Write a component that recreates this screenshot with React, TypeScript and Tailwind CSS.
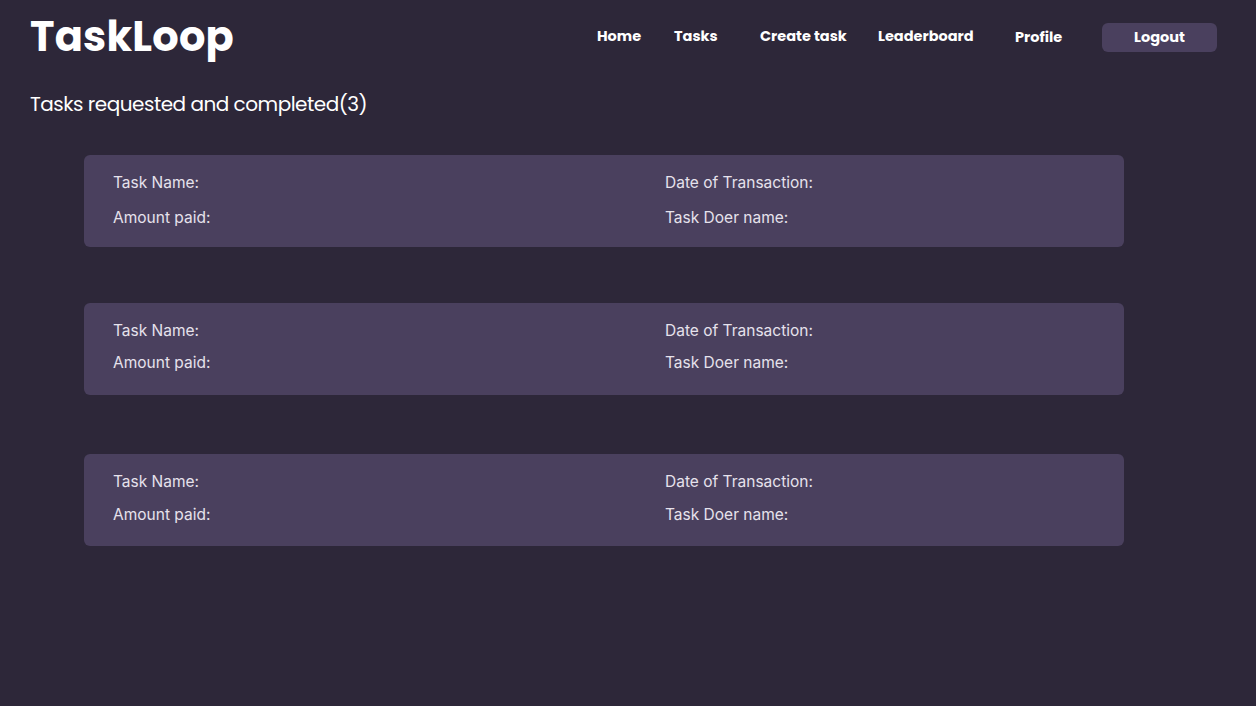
const tasks = [
  { gap: "mt-[38px]", row: "gap-[17px] pb-[2px]" },
  { gap: "mt-[56px]", row: "gap-[14px] pb-[5px]" },
  { gap: "mt-[59px]", row: "gap-[15px] pb-[3px]" },
];

function TaskCard({ gap, row }: { gap: string; row: string }) {
  return (
    <div className={`${gap} ml-[84px] w-[1040px] h-[92px] rounded-md bg-[#4a405e] px-[29px] flex flex-col justify-center ${row}`}>
      <div className="grid grid-cols-[552px_1fr] text-[15.5px] leading-[18px] text-[#e6e2ec]">
        <span>Task Name:</span>
        <span>Date of Transaction:</span>
      </div>
      <div className="grid grid-cols-[552px_1fr] text-[15.5px] leading-[18px] text-[#e6e2ec]">
        <span>Amount paid:</span>
        <span>Task Doer name:</span>
      </div>
    </div>
  );
}

export default function App() {
  return (
    <div className="min-h-screen w-full bg-[#2d2739] font-['Poppins','Inter',sans-serif] text-white">
      <header className="flex items-start justify-between pl-[30px] pr-[39px] pt-[11px]">
        <h1 className="text-[41.5px] font-bold leading-[52px] tracking-[0.2px]">TaskLoop</h1>
        <nav className="flex items-center text-[14.5px] font-bold mt-[12px]">
          <a className="w-[77px] mb-[2px]">Home</a>
          <a className="w-[86px] mb-[2px]">Tasks</a>
          <a className="w-[118px] mb-[2px]">Create task</a>
          <a className="w-[137px] mb-[2px]">Leaderboard</a>
          <a className="w-[87px]">Profile</a>
          <button className="w-[115px] h-[29px] rounded-md bg-[#4a405e] text-[14.5px] font-bold text-white">
            Logout
          </button>
        </nav>
      </header>
      <h2 className="mt-[28px] pl-[30px] text-[20px] font-normal tracking-[-0.5px] leading-[26px]">
        Tasks requested and completed(3)
      </h2>
      <main className="font-['Inter',sans-serif] pb-10">
        {tasks.map((t, i) => (
          <TaskCard key={i} gap={t.gap} row={t.row} />
        ))}
      </main>
    </div>
  );
}
